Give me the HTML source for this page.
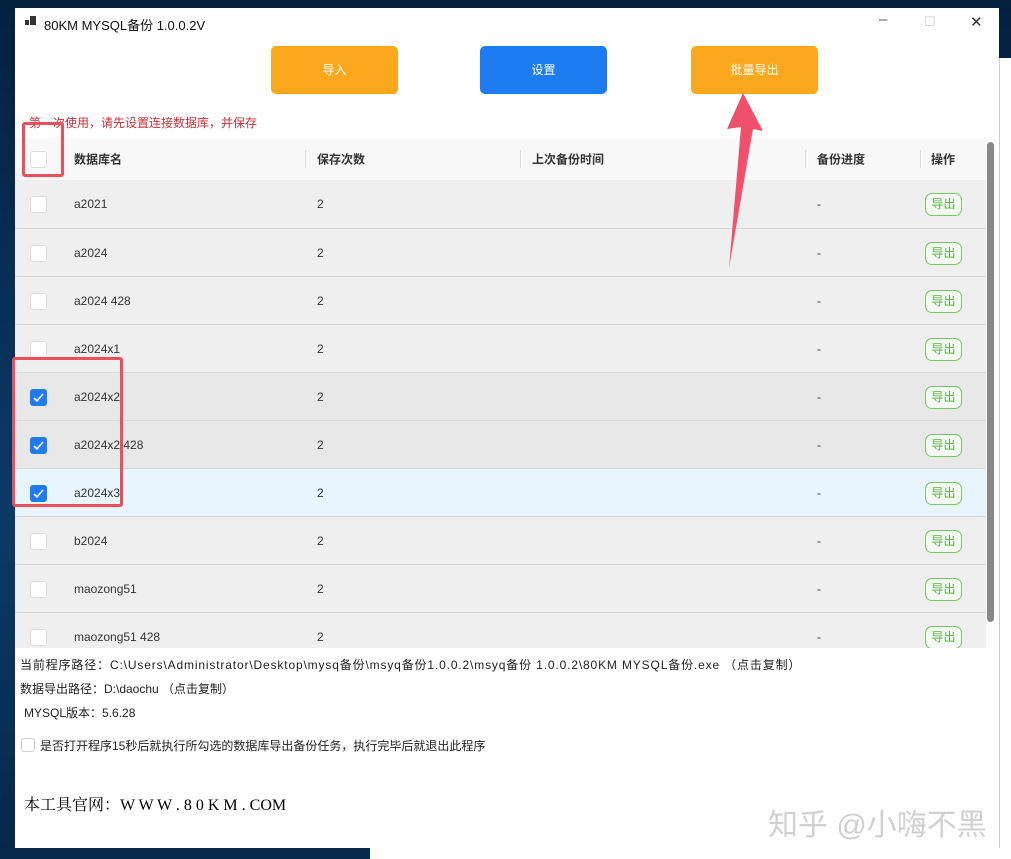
<!DOCTYPE html>
<html><head><meta charset="utf-8"><style>
*{margin:0;padding:0;box-sizing:border-box}
body{width:1011px;height:859px;overflow:hidden;background:#0d2a4a;font-family:"Liberation Sans","Noto Sans CJK SC",sans-serif;position:relative}
.bg{position:absolute;inset:0;background:linear-gradient(180deg,#03203f 0%,#0b3a66 60%,#06284a 100%)}
.other{position:absolute;left:999px;top:58px;width:12px;height:801px;background:#fff;border-left:1px solid #ccc}
.botw{position:absolute;left:370px;top:848px;width:641px;height:11px;background:#fff}
.win{position:absolute;left:15px;top:8px;width:984px;height:840px;background:#fff}
.title{position:absolute;left:0;top:0;height:30px;width:100%;font-size:13px;color:#111}
.title .ic{position:absolute;left:10px;top:8px}
.title .t{position:absolute;left:29px;top:7px}
.wc{position:absolute;top:5px;font-size:15px;color:#444}
.btn{position:absolute;top:38px;width:127px;height:48px;border-radius:5px;color:#fff;font-size:12px;text-align:center;line-height:48px}
.warn{position:absolute;left:14px;top:106px;font-size:12px;color:#c8303a}
.tbl{position:absolute;left:0;top:130px;width:971px;height:510px;overflow:hidden}
.hd{height:42px;background:#f8f8f8;position:relative;font-size:12px;font-weight:bold;color:#333}
.row{height:48px;background:#efefef;border-top:1px solid #d8d8d8;position:relative;font-size:12px;color:#333}
.c{position:absolute;top:50%;transform:translateY(-50%)}
.cb{position:absolute;left:15px;top:50%;margin-top:-8px;width:17px;height:17px;border:1px solid #ddd;border-radius:3px;background:#fff}
.cb.on{background:#1e7cf0;border-color:#1e7cf0}
.sep{position:absolute;top:12px;width:1px;height:18px;background:#ddd}
.ex{position:absolute;left:910px;top:50%;margin-top:-11px;width:37px;height:23px;border:1px solid #7cc56a;border-radius:7px;color:#5aae49;font-size:12px;text-align:center;line-height:21px;background:#f4fbf2}
.sb{position:absolute;left:972px;top:134px;width:7px;height:480px;background:#888;border-radius:4px}
.info{position:absolute;font-size:12px;color:#222}
.red{position:absolute;border:3px solid #e8505e;border-radius:3px}
</style></head><body>
<div class="bg"></div>
<div class="other"></div>
<div class="botw"></div>
<div class="win">
 <div class="title"><svg class="ic" width="12" height="11"><rect x="0" y="4" width="4" height="5" fill="#333"/><rect x="5" y="0" width="6" height="9" fill="#333"/></svg><span class="t">80KM MYSQL备份 1.0.0.2V</span>
 <span class="wc" style="left:864px;top:3px;color:#555">–</span><span class="wc" style="left:909px;color:#ccc;font-size:13px;top:6px">☐</span><span class="wc" style="left:955px;top:5px;color:#333">✕</span></div>
 <div class="btn" style="left:256px;background:#fca81e">导入</div>
 <div class="btn" style="left:465px;background:#1d7cf2">设置</div>
 <div class="btn" style="left:676px;background:#fca81e">批量导出</div>
 <div class="warn">第一次使用，请先设置连接数据库，并保存</div>
 <div class="tbl">
  <div class="hd"><div class="cb"></div><span class="c" style="left:59px">数据库名</span><div class="sep" style="left:290px"></div><span class="c" style="left:302px">保存次数</span><div class="sep" style="left:505px"></div><span class="c" style="left:517px">上次备份时间</span><div class="sep" style="left:790px"></div><span class="c" style="left:802px">备份进度</span><div class="sep" style="left:905px"></div><span class="c" style="left:916px">操作</span></div>
  <div class="row" style="border-top:0"><div class="cb"></div><span class="c" style="left:59px">a2021</span><span class="c" style="left:302px">2</span><span class="c" style="left:802px">-</span><div class="ex">导出</div></div>
  <div class="row"><div class="cb"></div><span class="c" style="left:59px">a2024</span><span class="c" style="left:302px">2</span><span class="c" style="left:802px">-</span><div class="ex">导出</div></div>
  <div class="row"><div class="cb"></div><span class="c" style="left:59px">a2024 428</span><span class="c" style="left:302px">2</span><span class="c" style="left:802px">-</span><div class="ex">导出</div></div>
  <div class="row"><div class="cb"></div><span class="c" style="left:59px">a2024x1</span><span class="c" style="left:302px">2</span><span class="c" style="left:802px">-</span><div class="ex">导出</div></div>
  <div class="row" style="background:#e8e8e8"><div class="cb on"><svg width="15" height="15"><path d="M3 8l3 3 6-7" stroke="#fff" stroke-width="1.6" fill="none"/></svg></div><span class="c" style="left:59px">a2024x2</span><span class="c" style="left:302px">2</span><span class="c" style="left:802px">-</span><div class="ex">导出</div></div>
  <div class="row" style="background:#e8e8e8"><div class="cb on"><svg width="15" height="15"><path d="M3 8l3 3 6-7" stroke="#fff" stroke-width="1.6" fill="none"/></svg></div><span class="c" style="left:59px">a2024x2 428</span><span class="c" style="left:302px">2</span><span class="c" style="left:802px">-</span><div class="ex">导出</div></div>
  <div class="row" style="background:#e8f4fe"><div class="cb on"><svg width="15" height="15"><path d="M3 8l3 3 6-7" stroke="#fff" stroke-width="1.6" fill="none"/></svg></div><span class="c" style="left:59px">a2024x3</span><span class="c" style="left:302px">2</span><span class="c" style="left:802px">-</span><div class="ex">导出</div></div>
  <div class="row"><div class="cb"></div><span class="c" style="left:59px">b2024</span><span class="c" style="left:302px">2</span><span class="c" style="left:802px">-</span><div class="ex">导出</div></div>
  <div class="row"><div class="cb"></div><span class="c" style="left:59px">maozong51</span><span class="c" style="left:302px">2</span><span class="c" style="left:802px">-</span><div class="ex">导出</div></div>
  <div class="row"><div class="cb"></div><span class="c" style="left:59px">maozong51 428</span><span class="c" style="left:302px">2</span><span class="c" style="left:802px">-</span><div class="ex">导出</div></div>
 </div>
 <div class="sb"></div>
 <div class="info" style="left:5px;top:648px;letter-spacing:.85px">当前程序路径：C:\Users\Administrator\Desktop\mysq备份\msyq备份1.0.0.2\msyq备份 1.0.0.2\80KM MYSQL备份.exe （点击复制）</div>
 <div class="info" style="left:5px;top:672px">数据导出路径：D:\daochu （点击复制）</div>
 <div class="info" style="left:9px;top:696px">MYSQL版本：5.6.28</div>
 <div style="position:absolute;left:6px;top:730px;width:14px;height:14px;border:1px solid #ccc;border-radius:3px"></div>
 <div class="info" style="left:25px;top:729px">是否打开程序15秒后就执行所勾选的数据库导出备份任务，执行完毕后就退出此程序</div>
 <div class="info" style="left:9px;top:784px;font-size:16px;font-family:'Liberation Serif','Noto Serif CJK SC',serif;color:#000">本工具官网：W W W . 8 0 K M . COM</div>
 <div class="info" style="left:753px;top:792px;font-size:30px;color:#d0d0d0">知乎 @小嗨不黑</div>
 <div class="red" style="left:7px;top:114px;width:42px;height:55px"></div>
 <div class="red" style="left:-3px;top:349px;width:111px;height:150px"></div>
 <svg style="position:absolute;left:700px;top:85px" width="60" height="180"><path d="M28 0 L48 38 L38 36 L14 175 L26 34 L12 36 Z" fill="#f0506a"/></svg>
</div>
</body></html>
